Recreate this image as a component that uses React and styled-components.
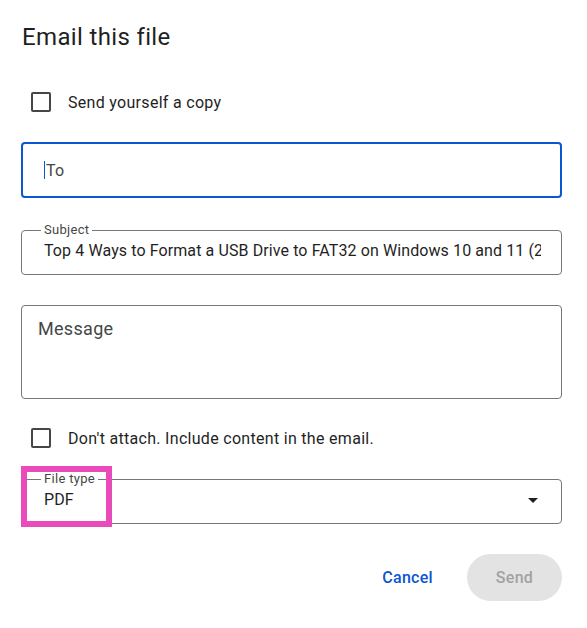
import React from "react";
import styled, { createGlobalStyle } from "styled-components";

// ******************
// component
// ******************
const App = () => {
	return (
		<>
			<GlobalStyle />
			<Dialog>
				<Title>Email this file</Title>

				<CheckRow $top={39}>
					<Box />
					<CheckLabel>Send yourself a copy</CheckLabel>
				</CheckRow>

				<FocusedField>
					<Caret />
					<Placeholder>To</Placeholder>
				</FocusedField>

				<Field $top={24}>
					<Legend>Subject</Legend>
					<Value>
						Top 4 Ways to Format a USB Drive to FAT32 on Windows 10 and 11 (2024)
					</Value>
				</Field>

				<MessageBox>
					<MessageHint>Message</MessageHint>
				</MessageBox>

				<CheckRow $top={29}>
					<Box />
					<CheckLabel>Don't attach. Include content in the email.</CheckLabel>
				</CheckRow>

				<SelectWrap>
					<Field $top={0}>
						<Legend>File type</Legend>
						<Value>PDF</Value>
						<Arrow viewBox="0 0 24 24">
							<path d="M7 10l5 5 5-5z" />
						</Arrow>
					</Field>
					{/* annotation box drawn over the select */}
					<Highlight />
				</SelectWrap>

				<Actions>
					<TextButton>Cancel</TextButton>
					<SendButton disabled>Send</SendButton>
				</Actions>
			</Dialog>
		</>
	);
};

export default App;

// ******************
// styles
// ******************
const GlobalStyle = createGlobalStyle`
	body {
		margin: 0;
		background: #ffffff;
		font-family: Roboto, "Liberation Sans", Arial, sans-serif;
		letter-spacing: 0.3px;
		color: #1f1f1f;
	}
`;
const Dialog = styled.div`
	display: flex;
	flex-direction: column;
	width: 541px;
	padding: 0 25px 0 21px;
`;
const Title = styled.h1`
	margin: 21px 0 0 1px;
	font-size: 24px;
	line-height: 32px;
	font-weight: 400;
	letter-spacing: 0.35px;
	color: #1f1f1f;
`;
const CheckRow = styled.label`
	display: flex;
	align-items: center;
	height: 20px;
	margin-top: ${(p) => p.$top}px;
	padding-left: 10px;
`;
const Box = styled.span`
	width: 20px;
	height: 20px;
	box-sizing: border-box;
	border: 2px solid #444746;
	border-radius: 2px;
	flex-shrink: 0;
`;
const CheckLabel = styled.span`
	margin-left: 17px;
	font-size: 16px;
	line-height: 21px;
	padding-top: 1px;
	color: #1f1f1f;
`;
const FocusedField = styled.div`
	display: flex;
	align-items: center;
	box-sizing: border-box;
	height: 56px;
	margin-top: 30px;
	padding-left: 21px;
	border: 2px solid #0b57d0;
	border-radius: 4px;
`;
const Caret = styled.span`
	width: 1px;
	height: 18px;
	background: #0b57d0;
`;
const Placeholder = styled.span`
	margin-left: 1px;
	font-size: 16px;
	line-height: 24px;
	padding-top: 1px;
	color: #444746;
`;
const Field = styled.fieldset`
	display: flex;
	align-items: center;
	min-width: 0;
	margin: ${(p) => p.$top}px 0 0;
	padding: 1px 20px 11px 22px;
	border: 1px solid #747775;
	border-radius: 4px;
`;
const Legend = styled.legend`
	margin-left: -3px;
	padding: 0 3px;
	font-size: 13px;
	line-height: 16px;
	color: #444746;
`;
const Value = styled.div`
	flex: 1;
	overflow: hidden;
	white-space: nowrap;
	font-size: 16px;
	line-height: 24px;
	letter-spacing: 0.1px;
	color: #1f1f1f;
`;
const Arrow = styled.svg`
	width: 24px;
	height: 24px;
	margin-right: -4px;
	fill: #1f1f1f;
	flex-shrink: 0;
`;
const MessageBox = styled.div`
	box-sizing: border-box;
	height: 94px;
	margin-top: 30px;
	padding: 11px 16px;
	border: 1px solid #747775;
	border-radius: 4px;
`;
const MessageHint = styled.div`
	font-size: 18px;
	line-height: 24px;
	color: #444746;
`;
const SelectWrap = styled.div`
	position: relative;
	margin-top: 23px;
`;
const Highlight = styled.div`
	position: absolute;
	left: 0;
	top: -5px;
	width: 91px;
	height: 61px;
	box-sizing: border-box;
	border: 6px solid #e94bbb;
	pointer-events: none;
`;
const Actions = styled.div`
	display: flex;
	justify-content: flex-end;
	align-items: center;
	gap: 22px;
	margin-top: 30px;
`;
const TextButton = styled.button`
	height: 40px;
	padding: 0 12px;
	border: none;
	background: none;
	font-family: inherit;
	font-size: 16px;
	font-weight: 500;
	letter-spacing: inherit;
	color: #0b57d0;
`;
const SendButton = styled.button`
	width: 95px;
	height: 47px;
	border: none;
	border-radius: 24px;
	background: #e3e3e3;
	font-family: inherit;
	font-size: 16px;
	font-weight: 500;
	letter-spacing: inherit;
	color: #a2a2a2;
`;
